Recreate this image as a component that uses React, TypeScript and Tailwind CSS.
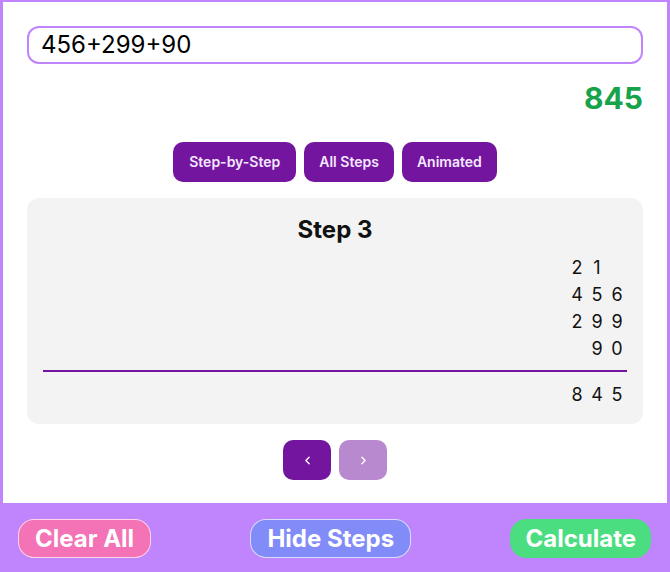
import { ChevronLeft, ChevronRight } from "lucide-react";

const rows = [
  ["", "2", "1", ""],
  ["", "4", "5", "6"],
  ["", "2", "9", "9"],
  ["", "", "9", "0"],
];

function DigitRow({ cells }: { cells: string[] }) {
  return (
    <div className="flex justify-end h-[27px] items-center">
      {cells.map((c, i) => (
        <span key={i} className="w-5 text-center text-[18px] text-[#111]">
          {c}
        </span>
      ))}
    </div>
  );
}

export default function App() {
  return (
    <div
      className="w-[670px] h-[572px] bg-[#c084fc] flex flex-col pt-[2px] px-[3px] overflow-hidden"
      style={{ fontFamily: "Inter, 'Noto Sans', sans-serif" }}
    >
      {/* zona branca principal */}
      <div className="flex-1 bg-white px-6 pt-6 flex flex-col">
        <div className="h-[38px] border-2 border-[#c084fc] rounded-xl flex items-center px-[12px]">
          <span className="text-2xl text-black leading-none">456+299+90</span>
        </div>

        <div className="mt-4 text-right text-3xl font-bold text-[#16a34a] leading-9">
          845
        </div>

        <div className="mt-[26px] flex justify-center gap-2">
          <button className="h-10 px-4 rounded-[10px] bg-[#7415a0] text-[#f3e8ff] text-sm font-semibold">
            Step-by-Step
          </button>
          <button className="h-10 px-[15px] rounded-[10px] bg-[#7415a0] text-[#f3e8ff] text-sm font-semibold">
            All Steps
          </button>
          <button className="h-10 px-[15px] rounded-[10px] bg-[#7415a0] text-[#f3e8ff] text-sm font-semibold">
            Animated
          </button>
        </div>

        <div className="mt-4 bg-[#f3f3f3] rounded-xl p-4">
          <h2 className="text-2xl font-bold text-center leading-8 text-[#111]">Step 3</h2>
          <div className="mt-2">
            {rows.map((r, i) => (
              <DigitRow key={i} cells={r} />
            ))}
          </div>
          <div className="mt-2 h-[2px] bg-[#7415a0]" />
          <div className="mt-[9px]">
            <DigitRow cells={["", "8", "4", "5"]} />
          </div>
        </div>

        <div className="mt-4 flex justify-center gap-2">
          <button className="w-12 h-10 rounded-[10px] bg-[#7415a0] flex items-center justify-center text-white">
            <ChevronLeft size={13} strokeWidth={2.5} />
          </button>
          <button className="w-12 h-10 rounded-[10px] bg-[#7415a0] opacity-50 flex items-center justify-center text-white">
            <ChevronRight size={13} strokeWidth={2.5} />
          </button>
        </div>
      </div>

      {/* rodapé */}
      <div className="h-[69px] flex justify-between items-start pt-4 pl-[15px] pr-[16px]">
        <button className="h-[39px] px-[16px] rounded-2xl bg-[#f472b6] border border-white/70 text-white text-2xl font-bold">
          Clear All
        </button>
        <button className="h-[39px] px-[16px] rounded-2xl bg-[#818cf8] border border-white/70 text-white text-2xl font-bold">
          Hide Steps
        </button>
        <button className="h-[39px] px-[14px] rounded-2xl bg-[#4ade80] border border-[#4ade80] text-white text-2xl font-bold">
          Calculate
        </button>
      </div>
    </div>
  );
}
